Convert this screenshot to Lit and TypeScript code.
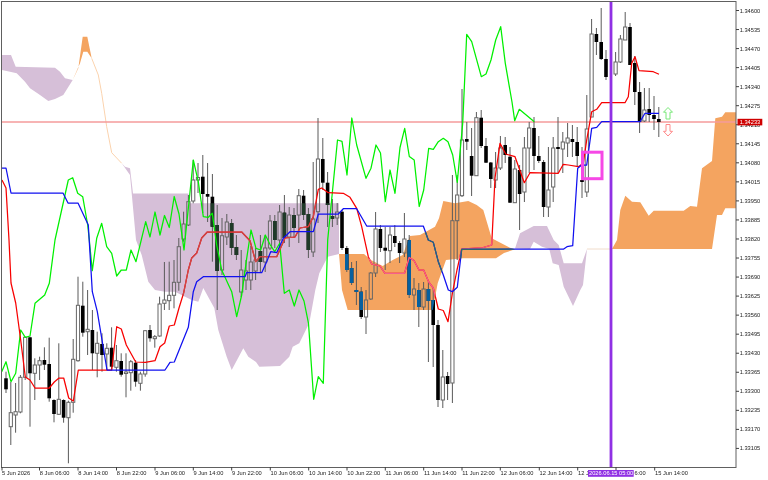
import { LitElement, html, css, svg } from "lit";
import { customElement } from "lit/decorators.js";

const X = (i: number) => 6 + 4.8 * i;
// high, low, body top, body bottom, kind (0 hollow, 1 solid)
const CANDLES: number[][] = [
  [371.7,393,378.3,389.3,1],[382,445,412.7,426.7,0],[383,432.7,411.7,415,0],[375,413.3,377.3,412,0],[336.7,380,337.3,377.3,0],
  [336.7,426.7,337.3,373.3,1],[358.3,400,365,373.3,0],[356.7,380,360.7,365,0],[347.3,370,360,364.7,1],[337.7,401.7,364,398.3,1],
  [399.3,422.3,400,414,1],[343.3,415,399.3,414.3,0],[399.3,422.7,400,417.7,1],[400.7,463.3,402.3,417.7,0],[339,412.7,359.3,402.3,0],
  [276.7,361.7,305.3,360.7,0],[281.7,336.7,305.7,332.7,1],[290,355,329.3,331.7,0],[310,370,330,353.3,1],[331.7,377.3,343.3,353.3,0],
  [333.3,371.7,344,355,1],[343.3,370,348.3,354,0],[327.3,370,347.7,366.7,1],[345,371.7,360.7,367.3,0],[353.3,376.7,361,374.7,1],
  [353.3,397.3,372,373.3,0],[360,390.7,361.7,372.7,0],[360,386.7,362.7,381.7,1],[371.7,390.7,374,383.3,0],[330,376.7,330.7,374,0],
  [325,341.7,330,338.3,1],[335,347.7,336.7,338.7,0],[296.7,336.7,304,336,0],[262,310,300,303.3,0],[261.7,310,295.3,300.7,0],
  [260,308.3,282.3,295.3,0],[238,290.7,246.7,282.3,0],[211.7,241.7,224,239,0],[195,226,201.7,225,0],[160,203.3,180,201,0],
  [163,193,177.5,180,0],[155,213,176.7,194,1],[163,222,194,196.7,1],[174,261.7,196.7,226.7,1],[205,310,225,271,1],
  [218,275,235.7,270,0],[214,245,222,237,0],[219,255,223,248,1],[235,260,247,255,1],[250,297,270,292,0],
  [260,290,271,280,0],[246,290,262,280,0],[248,280,260,271,0],[235,272,251,262,1],[235,272,248,262,0],
  [215,250,221,248,0],[215,248,221,240,1],[205,248,212,240,0],[195,243,212.7,238,1],[207,247,215,237,0],
  [208,238,215,228,1],[189,243,195.7,215,0],[190,220,195.7,215,1],[208,258,214,250,1],[162,257,219,252,0],
  [118,223,159,211.7,0],[138,190,159,182.7,1],[172,227,182.7,205,1],[199,227,216,218.7,1],[203,225,212,218,0],
  [210,250,211.7,248,1],[246,272,248,270,1],[262,285,268,283,1],[261,305,290,292,1],[287,319,291.7,317,1],
  [290,334,300,317,0],[272,300,273,299,0],[212,277,229,273,0],[225,252,229,248,1],[227,270,247.7,250.7,1],
  [227,263,235,250.7,0],[225,247,236,243,1],[241,263,243,253,1],[213,257,239,253,0],[235,298,240,295,1],
  [278,310,289,295,0],[283,327,290,307,1],[282,310,289,307,0],[282,362,289,301,1],[288,367,300,325,1],
  [320,407,325,400,1],[350,408,377,400,0],[372,400,376,384,1],[175,403,220.7,383,0],[175,260,195,220.7,0],
  [89,197,140,195.7,0],[122,150,139,141.7,1],[128,196,156,175.7,1],[112,175.7,117.7,175.7,0],[110,148,117.7,146,1],
  [138,163,146,162.7,1],[162,188,162.5,179,1],[152,188,168,180,0],[136,170,148,168,0],[137,163,145,155,1],
  [147,203,156.7,202.7,1],[160,203,169,202.7,0],[165,230,170,194,1],[137,202,148,192,0],[122,173,128,148,0],
  [117,170,128,156,1],[136,163,156,161,1],[160,217,162,207,1],[147,217,190,207,0],[137,202,148,187,0],
  [117,173,147,149,1],[132,173,142,149,0],[123,157,138,143,0],[125,157,139,142,1],[127,167,142,156,1],
  [147,198,180,182,1],[95,197,129,192,0],[19,117,34,117,0],[28,55,34,42,1],[8,60,42,59,1],
  [50,80,59,77,1],[0,0,0,0,2],[52,76,62,74,0],[35,63,39,62,0],[12,40,27,40,0],
  [23,65,27,65,1],[56,105,63,92,1],[82,133,92,122,1],[88,122,110,121,0],[88,122,109,115,1],
  [96,130,115,119,1],[107,137,119,122,1],
];

const GREEN = "1.7,371.7 6,361.7 11,381.7 15.7,373.3 20.7,330 25.3,337.3 30,336 35,303.3 44.7,295 49.3,283.3 55,240 68.3,180 72.7,177.7 77.7,193.3 82.7,196.7 87.7,225 89.3,240 92.3,270.7 96.7,238.3 101.7,223.3 106.7,246.7 111.7,253.3 116.7,276 121.3,270 126.3,270 131,250 136,261.7 145.7,221.7 150,237 155,212 160,235 164.5,215.5 169.3,227.5 174.2,196.5 179,214 184,250 189,201.7 193.3,160 198.3,181.7 203.3,216.7 208.3,217.3 212.3,213.3 216.7,245 221.7,270 231.7,291.7 236.7,316.7 241.7,295 246.7,258.3 251,230 256,248.3 260.7,250 265.3,235 270.3,245 274.7,251.7 279.7,243.3 284.3,293.3 289.3,290 294.3,306 299,290 304,301 308.5,323.3 313.7,399.3 318.3,376.7 323.3,383.3 327.7,240 337.5,140 342,141.3 347,175 351.8,118 356.7,145 366,178.3 371,168.2 376,145 380.5,153 385.3,201.7 390,170 395,193.3 400,147.5 404.7,128.3 409.3,156.5 414.2,160 419.2,206.5 423.7,190 428.7,148.3 433.3,149.3 438.3,141.7 443.3,138.3 448,141.7 452.7,155 457.3,182.3 462.7,123.3 466.7,34.3 471.7,41.7 481.3,76.7 486,74 491,60 495.7,40 500.7,26.7 505.3,63.3 512,102 514.7,120.7 519.3,109.3 534.3,121.7";
const RED = "2,180 6,188 9,240 11,283 15.7,303 20.7,340 25.3,377 30,380 35,388 49.3,388 54.3,382 59,378 63.7,378 68.7,398 73.3,401 78.3,370 111.7,370 116.7,326.7 121.3,329 126.3,345 135.7,362 145.3,362.3 155,360.7 160,346.7 164.7,343 169.3,326 174.3,325 179,308 183.7,292.7 188.3,270 191.7,258 196.7,253 201.7,238 207.3,232 241.7,232 250,240.7 255.7,261.7 260,256.7 276.7,256.7 285,238 295,237 300,228 308.3,226.7 313.3,216.7 318.3,189.3 321.7,188 328.3,192.7 343.3,193.3 350,197.3 356.7,208.3 361.7,226.7 368.3,256.7 371.7,264 380,266 385,273.3 404.5,273.3 409.2,257.5 414,260.5 419,270 423.7,270 428.7,282 433.3,288 438.3,309 443.3,310.5 448,321.7 452.5,292.5 457,270 461.7,249 483.3,247.5 491.7,245 495,178 500,143.3 505.7,154 515,156.7 524.3,182.7 530,172.7 558.3,173.3 563.3,164.3 568.3,165 578.3,166.7 583.3,163.3 586.7,140 591.7,111.7 596.7,109.3 601.7,102.7 625,102.7 628.3,96.7 631.7,63.3 635,56.7 639,70.7 653.3,71.7 659,74.3";
const BLUE = "2,168 6,168 11,193 63,193 68,203 78,203 88.3,225 92.3,291.7 97.3,311.7 107,370 165,370 170,362.3 174.3,362 188.3,327.3 193.3,291.7 196.7,281.7 203.3,276.7 245,276.7 246.7,272.6 261.7,272.7 266.7,261.7 270.7,251.7 276.7,252.7 283.3,238.3 290,231.7 313.3,231.7 318.3,214 338.3,214 343.3,208.7 356.7,208.7 366.7,226 423.3,226 428.3,240 433.3,242.3 438.3,261.7 443.3,275 448.3,290 452.3,291.7 457.3,287.3 461.7,249.3 563.7,249 567,246.7 572.7,245.7 573.7,230 577.7,168.3 581.7,165 586.7,165 591.7,128.3 596.7,127.3 601.7,121.7 640,121.7 645,113.3 659,113.3";
const PEACH = "91.7,58.3 98.3,75 101.7,93.3 106.7,126.7 111.7,152.7 121.7,163.3";
const PURPLE = [
  "2,55 11,55 15.7,66.7 55,67.7 60,71.7 65,78.3 72.7,80 63.3,95 55,99 48.3,101 40,95 30,88.3 25,81.7 16.7,73.3 10,71.7 2,70",
  "121.7,163.3 125,166.7 130,168.3 133,193.5 188.3,193.5 190,203.3 339,203.3 339,254 327.7,256.7 319.3,273.3 315.3,290 309.3,323 299.3,343.3 292.7,346.7 289.3,356.7 280,366 259.3,366.7 256,362 248.3,356.7 243.3,348.3 231.7,370 226.7,356.7 218.3,330 214.3,308 203.3,288 198.3,301.7 191.7,300 175,291.7 165,291.7 155,290 148.3,281.7 141.7,255 136,240 130,175",
  "515,248.5 520,233.3 533.7,226 547,226 553.7,240 558.7,245 563.7,263.3 582,263.3 587,249 583,285 580.3,290 573,306 563.7,286.7 558.7,265 552.7,263.3 549.3,249 542,246.7 533.7,241.7 530,249",
];
const ORANGE = [
  "72.7,80 78.3,68.3 82.7,36.7 87.3,36.7 91.7,58.3 87.3,51.7 83.3,51.7 80,63.3",
  "339,254 364,254 371,260 382.7,266 392.7,260 402.7,255 410,236 420,235 435,226.7 439,218.3 443.3,201 455,203.3 468.3,201 476.7,205 483.3,210 491.7,238.3 510,247.7 515,249.3 504,253 496,258.3 462.7,258.3 446,260 437.7,283.3 432.7,310 347.7,310 342,290",
  "612,249 617,240 620.3,210 625.3,195.7 632,201.7 640.3,202.3 648.7,215.7 653.7,210.7 683.7,210.7 690.3,206 697,206.7 702,168.3 712,161 715.3,118.3 722,116.7 725.3,112.3 736,112.3 736,208.3 725.3,208.3 722,215 717,215 712,249",
];
const PRICES = ["1.34600","1.34535","1.34470","1.34405","1.34340","1.34275","1.34210","1.34145","1.34080","1.34015","1.33950","1.33885","1.33820","1.33755","1.33690","1.33625","1.33560","1.33495","1.33430","1.33365","1.33300","1.33235","1.33170","1.33105"];
// the date tag covers most of the two labels beside it, so only their visible ends are written
const TIMES: [number, string, number][] = [
  [2,"5 Jun 2026",2],[39.5,"8 Jun 06:00",39.8],[78,"8 Jun 14:00",78.3],[116.5,"8 Jun 22:00",116.8],[155,"9 Jun 06:00",155.3],[193.3,"9 Jun 14:00",193.6],[231.7,"9 Jun 22:00",232],
  [270.3,"10 Jun 06:00",270.6],[308.7,"10 Jun 14:00",309],[347,"10 Jun 22:00",347.3],[385.3,"11 Jun 06:00",385.6],[423.7,"11 Jun 14:00",424],[462,"11 Jun 22:00",462.3],[500.3,"12 Jun 06:00",500.6],
  [539.3,"12 Jun 14:00",539.6],[577.7,"12 J",578],[616,"6:00",634.5],[654.7,"15 Jun 14:00",655],
];

@customElement("app-root")
export class AppRoot extends LitElement {
  static styles = css`
    :host { display: block; width: 768px; height: 480px; background: #fff; overflow: hidden; }
    .chart { display: block; width: 768px; height: 480px; filter: blur(0.3px); }
    .purple { fill: #d6bfd8; }
    .orange { fill: #f4a460; }
    .peach { fill: none; stroke: #fbd3ae; stroke-width: 1; }
    .pale { stroke: #f0dccb; stroke-width: 1; }
    .level { stroke: #f59b9b; stroke-width: 1.4; }
    .wick { stroke: #5a5a5a; stroke-width: 1; }
    .hollow { fill: none; stroke: #666; stroke-width: 1; }
    .solid { fill: #000; }
    .solid-o { fill: #07609f; }
    .solid-p { fill: #1f3a28; }
    .ln { fill: none; stroke-width: 1.25; stroke-linejoin: round; }
    .green { stroke: #00f000; }
    .red { stroke: #f80000; }
    .blue { stroke: #1010f0; }
    .pink { stroke: #f4608c; }
    .teal { stroke: #2b6a6d; }
    .redp { stroke: #cc4848; }
    .vline { stroke: #9030e4; stroke-width: 2.8; }
    .box { fill: none; stroke: #f648e6; stroke-width: 3; }
    .up { fill: #fff; stroke: #78e878; stroke-width: 1; }
    .down { fill: #fff; stroke: #ff8a8a; stroke-width: 1; }
    .frame { fill: none; stroke: #606060; stroke-width: 1; }
    .tick { stroke: #404040; stroke-width: 1; }
    .lbl { font: 5.7px "Liberation Sans", Arial, sans-serif; fill: #222; }
    .tagbg { fill: #cf0000; }
    .datebg { fill: #9030e4; }
    .white { fill: #fff; }
  `;

  private candles() {
    const wicks = CANDLES.map((c, i) => {
      const [h, l, t, b, k] = c;
      if (k === 2) return null;
      const x = X(i);
      return k === 1
        ? svg`<line class="wick" x1=${x} x2=${x} y1=${h} y2=${l}></line>`
        : svg`<line class="wick" x1=${x} x2=${x} y1=${h} y2=${t}></line><line class="wick" x1=${x} x2=${x} y1=${b} y2=${l}></line>`;
    });
    const bodies = (cls: string) =>
      CANDLES.map((c, i) => {
        const [, , t, b, k] = c;
        return k === 1 ? svg`<rect class=${cls} x=${X(i) - 1.8} y=${t} width="3.6" height=${Math.max(b - t, 1.5)}></rect>` : null;
      });
    const hollows = CANDLES.map((c, i) => {
      const [, , t, b, k] = c;
      return k === 0 ? svg`<rect class="hollow" x=${X(i) - 1.6} y=${t} width="3.2" height=${Math.max(b - t, 1.5)}></rect>` : null;
    });
    return svg`${wicks}${hollows}${bodies("solid")}
      <g clip-path="url(#cloud-o)">${bodies("solid-o")}</g>
      <g clip-path="url(#cloud-p)">${bodies("solid-p")}</g>`;
  }

  render() {
    return html`<svg class="chart" viewBox="0 0 768 480" xmlns="http://www.w3.org/2000/svg">
      <defs>
        <clipPath id="cloud-o">${ORANGE.map((p) => svg`<polygon points=${p}></polygon>`)}</clipPath>
        <clipPath id="cloud-p">${PURPLE.map((p) => svg`<polygon points=${p}></polygon>`)}</clipPath>
      </defs>
      ${PURPLE.map((p) => svg`<polygon class="purple" points=${p}></polygon>`)}
      ${ORANGE.map((p) => svg`<polygon class="orange" points=${p}></polygon>`)}
      <polyline class="peach" points=${PEACH}></polyline>
      <line class="pale" x1="587" x2="612" y1="249" y2="249"></line>
      <line class="level" x1="2" x2="736" y1="122" y2="122"></line>
      ${this.candles()}
      <polyline class="ln green" points=${GREEN}></polyline>
      <polyline class="ln red" points=${RED}></polyline>
      <polyline class="ln redp" clip-path="url(#cloud-p)" points=${RED}></polyline>
      <polyline class="ln pink" clip-path="url(#cloud-o)" points=${RED}></polyline>
      <polyline class="ln blue" points=${BLUE}></polyline>
      <polyline class="ln teal" clip-path="url(#cloud-o)" points=${BLUE}></polyline>
      <rect class="box" x="582.5" y="152.2" width="19.5" height="26.5"></rect>
      <line class="vline" x1="611" x2="611" y1="2" y2="467"></line>
      <polygon class="up" points="668,107.5 672.5,112.2 670,112.2 670,119 666,119 666,112.2 663.5,112.2"></polygon>
      <polygon class="down" points="668,136 672.5,131.3 670,131.3 670,124.5 666,124.5 666,131.3 663.5,131.3"></polygon>
      <rect class="frame" x="1.5" y="1.5" width="734.5" height="466"></rect>
      ${PRICES.map((p, i) => {
        const y = 10.5 + 19.04 * i;
        return svg`<line class="tick" x1="736" x2="739" y1=${y} y2=${y}></line><text class="lbl" x="739.7" y=${y + 2}>${p}</text>`;
      })}
      <rect class="tagbg" x="737.5" y="118.8" width="24.8" height="6.6"></rect>
      <text class="lbl white" x="739.7" y="124.2">1.34233</text>
      ${TIMES.map(([x, t, tx]) => svg`<line class="tick" x1=${x} x2=${x} y1="467" y2="470.5"></line><text class="lbl" x=${tx} y="474.5">${t}</text>`)}
      <rect class="datebg" x="588" y="470" width="45.7" height="6.8"></rect>
      <text class="lbl white" x="589" y="475.4">2026.06.15 05:00</text>
    </svg>`;
  }
}
